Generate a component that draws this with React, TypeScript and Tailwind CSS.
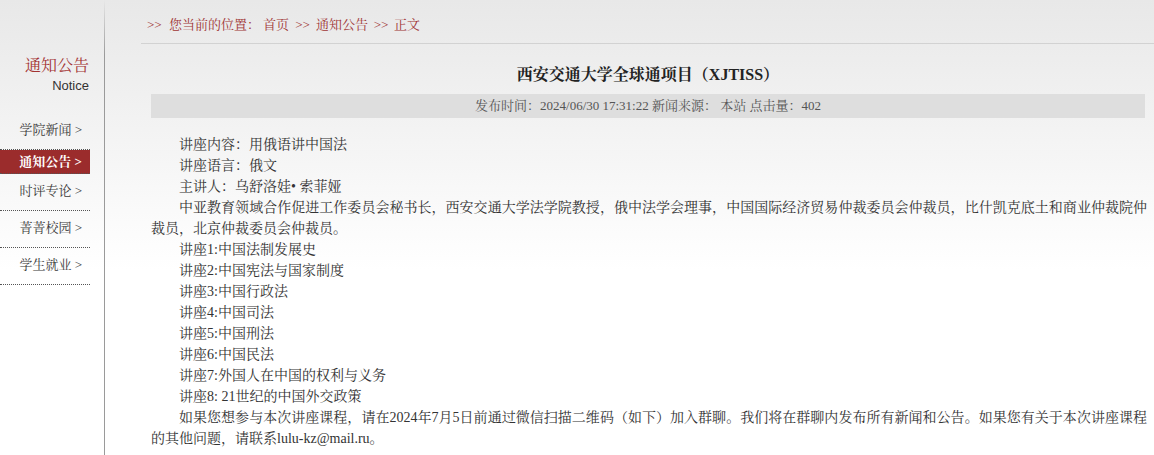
import React from "react";

const SERIF =
  '"Liberation Serif", "Noto Serif CJK SC", "Noto Sans CJK SC", serif';

const menu = [
  { label: "学院新闻", active: false },
  { label: "通知公告", active: true },
  { label: "时评专论", active: false },
  { label: "菁菁校园", active: false },
  { label: "学生就业", active: false },
];

const lectures = [
  "讲座1:中国法制发展史",
  "讲座2:中国宪法与国家制度",
  "讲座3:中国行政法",
  "讲座4:中国司法",
  "讲座5:中国刑法",
  "讲座6:中国民法",
  "讲座7:外国人在中国的权利与义务",
  "讲座8: 21世纪的中国外交政策",
];

export default function App() {
  return (
    <div
      className="flex w-[1154px] min-h-[455px] bg-[linear-gradient(to_bottom,#e8e8e8_0px,#ffffff_270px)]"
      style={{ fontFamily: SERIF }}
    >
      {/* Sidebar */}
      <aside className="w-[104px] shrink-0">
        <div className="pt-[56px] pr-[15px] text-right">
          <div className="text-[16px] leading-[20px] text-[#a33232]">通知公告</div>
          <div
            className="mt-[2px] text-[13px] leading-[16px] text-[#333]"
            style={{ fontFamily: '"Liberation Sans", Arial, sans-serif' }}
          >
            Notice
          </div>
        </div>
        <ul className="mt-[19px] w-[90px]">
          {menu.map((m) =>
            m.active ? (
              <li
                key={m.label}
                className="flex h-[24px] items-center justify-end border-b border-dotted border-[#555] bg-[#9b2c2c] pr-[8px] text-[13px] font-bold text-white"
              >
                {m.label} &gt;
              </li>
            ) : (
              <li
                key={m.label}
                className="flex h-[37px] items-center justify-end border-b border-dotted border-[#555] pb-[3px] pr-[8px] text-[13px] text-[#3a3a3a]"
              >
                {m.label} &gt;
              </li>
            )
          )}
        </ul>
      </aside>

      {/* Vertical divider */}
      <div className="w-px shrink-0 bg-[linear-gradient(to_bottom,#e8e8e8_0px,#9a9a9a_55px,#9a9a9a_100%)]" />

      {/* Main */}
      <main className="flex-1">
        <div className="ml-[36px] h-[44px] border-b border-[#d2d2d2] pl-[6px] pt-[16px] text-[13px] leading-[18px] text-[#a03535]">
          <span className="inline-block w-[22px]">&gt;&gt;</span>
          您当前的位置：<span className="inline-block w-[3px]" />首页
          <span className="inline-block w-[27px] text-center">&gt;&gt;</span>
          通知公告
          <span className="inline-block w-[26px] text-center">&gt;&gt;</span>
          正文
        </div>

        <div className="ml-[46px] w-[994px]">
          <h1 className="mt-[19px] text-center text-[16px] font-bold leading-[24px] text-[#222]">
            西安交通大学全球通项目（XJTISS）
          </h1>
          <div className="mt-[7px] flex h-[24px] items-center justify-center bg-[#dedede] text-[13px] text-[#555]">
            发布时间：2024/06/30 17:31:22 新闻来源： 本站 点击量：402
          </div>

          <div className="mt-[16px] w-[996px] text-justify text-[14px] leading-[21px] text-[#333]">
            <p className="indent-[28px]">讲座内容：用俄语讲中国法</p>
            <p className="indent-[28px]">讲座语言：俄文</p>
            <p className="indent-[28px]">主讲人：乌舒洛娃• 索菲娅</p>
            <p className="indent-[28px]">
              中亚教育领域合作促进工作委员会秘书长，西安交通大学法学院教授，俄中法学会理事，中国国际经济贸易仲裁委员会仲裁员，比什凯克底土和商业仲裁院仲
              <span className="whitespace-nowrap">裁员</span>，北京仲裁委员会仲裁员。
            </p>
            {lectures.map((l) => (
              <p key={l} className="indent-[28px]">
                {l}
              </p>
            ))}
            <p className="indent-[28px]">
              如果您想参与本次讲座课程，请在2024年7月5日前通过微信扫描二维码（如下）加入群聊。我们将在群聊内发布所有新闻和公告。如果您有关于本次讲座课程的其他问题，请联系lulu-kz@mail.ru。
            </p>
          </div>
        </div>
      </main>
    </div>
  );
}
